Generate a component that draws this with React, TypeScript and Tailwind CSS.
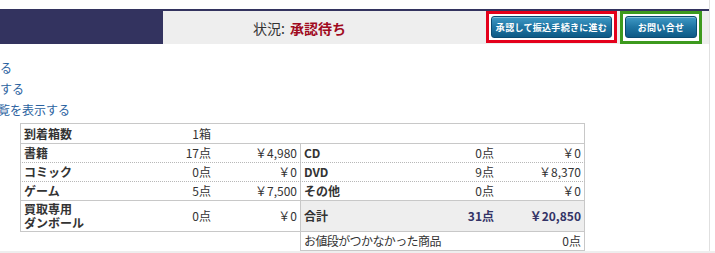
import React from "react";

const btn =
  "h-[22px] flex items-center justify-center rounded-[3px] border border-[#0b4b72] bg-gradient-to-b from-[#3f9ac6] via-[#1f75a3] to-[#0d5a86] text-white font-bold text-[9px] tracking-[0.3px] leading-none shadow-[inset_0_1px_0_rgba(255,255,255,0.35)]";

function Label({ children }: { children: React.ReactNode }) {
  return <div className="pl-[3px] font-bold text-[#333333] flex items-center">{children}</div>;
}

export default function App() {
  return (
    <div className="w-[715px] h-[253px] bg-white overflow-hidden flex flex-col font-['Noto_Sans_CJK_JP',sans-serif]">
      <div className="w-[710px] h-[251px] border-r border-[#e0e0e0] flex flex-col">
        {/* header */}
        <div className="mt-[9px] h-[35px] border-t-2 border-[#33335f] flex">
          <div className="w-[163px] bg-[#33335f]" />
          <div className="flex-1 bg-[#eeeeee] flex items-start">
            <div className="flex-1 h-[33px] flex items-center pl-[90px] text-[14px] leading-none">
              <span className="text-[#333333]">状況:</span>
              <span className="ml-[5px] font-bold text-[#a00a1e]">承認待ち</span>
            </div>
            <div className="flex items-start gap-[3px] pr-[7px]">
              <div className="border-[3px] border-[#e4001b] bg-white p-[2px]">
                <div className={btn + " w-[121px]"}>承認して振込手続きに進む</div>
              </div>
              <div className="border-[3px] border-[#3d9a1e] bg-white p-[2px] pb-[3px]">
                <div className={btn + " w-[72px]"}>お問い合せ</div>
              </div>
            </div>
          </div>
        </div>

        {/* links */}
        <div className="pt-[13px] text-[12px] leading-[21px] text-[#2b62a0] overflow-hidden">
          <div className="h-[21px] whitespace-nowrap"><span className="ml-[-24px]">閉じる</span></div>
          <div className="h-[21px] whitespace-nowrap"><span className="ml-[-24px]">印刷する</span></div>
          <div className="h-[21px] whitespace-nowrap"><span className="ml-[-14px]">一覧を表示する</span></div>
        </div>

        {/* table */}
        <div className="mt-[3px] ml-[20px] w-[565px] text-[12px] leading-none text-[#333333]">
          {/* row 1 */}
          <div className="h-[20px] flex border-t border-l border-r border-[#c8c8c8]">
            <div className="w-[139px] flex"><Label>到着箱数</Label></div>
            <div className="w-[52px] flex items-center justify-end pr-[1px]">1箱</div>
          </div>
          {/* rows 2-4 */}
          {[
            ["書籍", "17点", "￥4,980", "CD", "0点", "￥0"],
            ["コミック", "0点", "￥0", "DVD", "9点", "￥8,370"],
            ["ゲーム", "5点", "￥7,500", "その他", "0点", "￥0"],
          ].map((r, i) => (
            <div
              key={i}
              className={
                "h-[19px] flex border-l border-r border-[#c8c8c8] border-t " +
                (i === 0 ? "border-t-[#c8c8c8]" : "border-t-[#b8b8b8] [border-top-style:dotted]")
              }
            >
              <div className="w-[139px] flex"><Label>{r[0]}</Label></div>
              <div className="w-[52px] flex items-center justify-end pr-[1px]">{r[1]}</div>
              <div className="w-[88px] flex items-center justify-end pr-[3px]">{r[2]}</div>
              <div className="w-[130px] flex border-l border-[#c8c8c8]"><Label>{r[3]}</Label></div>
              <div className="w-[67px] flex items-center justify-end pr-[3px]">{r[4]}</div>
              <div className="w-[87px] flex items-center justify-end pr-[3px]">{r[5]}</div>
            </div>
          ))}
          {/* row 5 */}
          <div className="h-[31px] flex border-t border-l border-r border-[#c8c8c8]">
            <div className="w-[139px] flex">
              <div className="pl-[3px] font-bold text-[#333333] flex flex-col justify-center leading-[14px]">
                <span>買取専用</span>
                <span>ダンボール</span>
              </div>
            </div>
            <div className="w-[52px] flex items-center justify-end pr-[1px]">0点</div>
            <div className="w-[88px] flex items-center justify-end pr-[3px]">￥0</div>
            <div className="w-[284px] flex bg-[#eeeeee] border-l border-[#c8c8c8]">
              <div className="w-[129px] flex"><Label>合計</Label></div>
              <div className="w-[67px] flex items-center justify-end pr-[3px] font-bold text-[#333366]">31点</div>
              <div className="w-[87px] flex items-center justify-end pr-[3px] font-bold text-[#333366]">￥20,850</div>
            </div>
          </div>
          {/* row 6 */}
          <div className="h-[20px] flex border-t border-[#c8c8c8]">
            <div className="w-[280px]" />
            <div className="w-[285px] flex border-l border-r border-b border-[#c8c8c8]">
              <div className="w-[196px] pl-[3px] flex items-center whitespace-nowrap tracking-[-0.6px]">お値段がつかなかった商品</div>
              <div className="w-[87px] flex items-center justify-end pr-[3px]">0点</div>
            </div>
          </div>
        </div>
      </div>
      <div className="h-[2px] bg-[#eeeeee]" />
    </div>
  );
}
